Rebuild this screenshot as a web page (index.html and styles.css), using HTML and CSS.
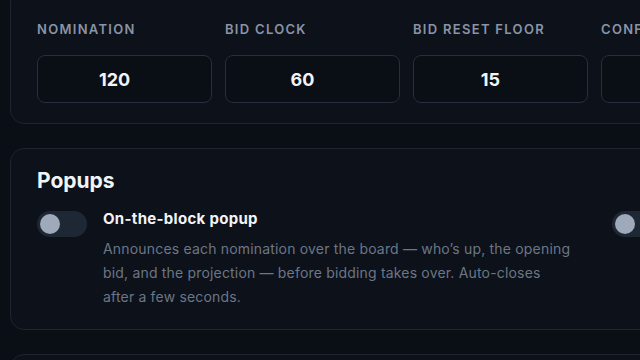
FILE: index.html
```html
<!DOCTYPE html>
<html lang="en">
<head>
  <meta name="viewport" content="width=device-width, initial-scale=1">
  <title>Auction Settings</title>
  <link rel="stylesheet" href="styles.css">
</head>
<body>
  <main class="settings">
    <section class="card timers">
      <div class="field-grid">
        <label class="field">
          <span class="field-label">Nomination</span>
          <input class="field-input" type="text" value="120">
        </label>
        <label class="field">
          <span class="field-label">Bid Clock</span>
          <input class="field-input" type="text" value="60">
        </label>
        <label class="field">
          <span class="field-label">Bid Reset Floor</span>
          <input class="field-input" type="text" value="15">
        </label>
        <label class="field">
          <span class="field-label">Confirm Delay</span>
          <input class="field-input" type="text" value="5">
        </label>
      </div>
    </section>

    <section class="card">
      <h2 class="card-title">Popups</h2>
      <div class="option-grid">
        <div class="option">
          <span class="toggle"><span class="knob"></span></span>
          <div class="option-text">
            <h4>On-the-block popup</h4>
            <p>Announces each nomination over the board — who’s up, the opening bid, and the projection — before bidding takes over. Auto-closes after a few seconds.</p>
          </div>
        </div>
        <div class="option">
          <span class="toggle"><span class="knob"></span></span>
          <div class="option-text">
            <h4>Sold popup</h4>
            <p>Shows the winning team and final price when the clock runs out.</p>
          </div>
        </div>
      </div>
    </section>

    <section class="card">
      <h2 class="card-title">Sounds</h2>
    </section>
  </main>
</body>
</html>
```

FILE: styles.css
```css
:root {
  --bg-color: #0a0e15;
  --card-bg: #0c111a;
  --card-border: #1d2530;
  --input-border: #272f3c;
  --text-color: #f2f4f8;
  --label-color: #8a94a6;
  --muted-color: #6c7686;
  --track-color: #1e2734;
  --knob-color: #9ea9ba;
}

body {
  margin: 0;
  background-color: var(--bg-color);
  color: var(--text-color);
  font-family: 'Inter', 'Liberation Sans', sans-serif;
  overflow: hidden;
}

.settings {
  width: 1200px;
  margin-top: -12px;
  padding: 0 10px;
  display: flex;
  flex-direction: column;
  gap: 24px;
}

.card {
  background-color: var(--card-bg);
  border: 1px solid var(--card-border);
  border-radius: 14px;
  padding: 20px 26px;
}

.timers {
  padding-top: 32px;
}

.field-grid {
  display: grid;
  grid-template-columns: repeat(6, 175px);
  gap: 13px;
}

.field {
  display: flex;
  flex-direction: column;
  gap: 18px;
}

.field-label {
  font-size: 13px;
  line-height: 16px;
  font-weight: 600;
  letter-spacing: 1.3px;
  text-transform: uppercase;
  color: var(--label-color);
}

.field-input {
  box-sizing: border-box;
  height: 48px;
  width: 100%;
  padding: 0 20px 0 0;
  background-color: var(--bg-color);
  border: 1px solid var(--input-border);
  border-radius: 8px;
  color: var(--text-color);
  font-family: inherit;
  font-size: 18px;
  font-weight: 700;
  text-align: center;
  outline: none;
}

.card-title {
  margin: 0 0 18px;
  font-size: 21px;
  line-height: 24px;
  font-weight: 700;
}

.option-grid {
  display: grid;
  grid-template-columns: repeat(2, 563px);
  gap: 12px;
}

.option {
  display: flex;
  gap: 16px;
  align-items: flex-start;
}

.toggle {
  flex: none;
  width: 50px;
  height: 26px;
  border-radius: 13px;
  background-color: var(--track-color);
  display: flex;
  align-items: center;
  padding: 0 3px;
  box-sizing: border-box;
}

.knob {
  width: 20px;
  height: 20px;
  border-radius: 50%;
  background-color: var(--knob-color);
}

.option-text h4 {
  margin: -2px 0 8px;
  font-size: 15px;
  line-height: 20px;
  font-weight: 700;
  letter-spacing: 0.3px;
}

.option-text p {
  margin: 0;
  max-width: 470px;
  font-size: 14px;
  line-height: 24px;
  letter-spacing: 0.18px;
  color: var(--muted-color);
}
```
